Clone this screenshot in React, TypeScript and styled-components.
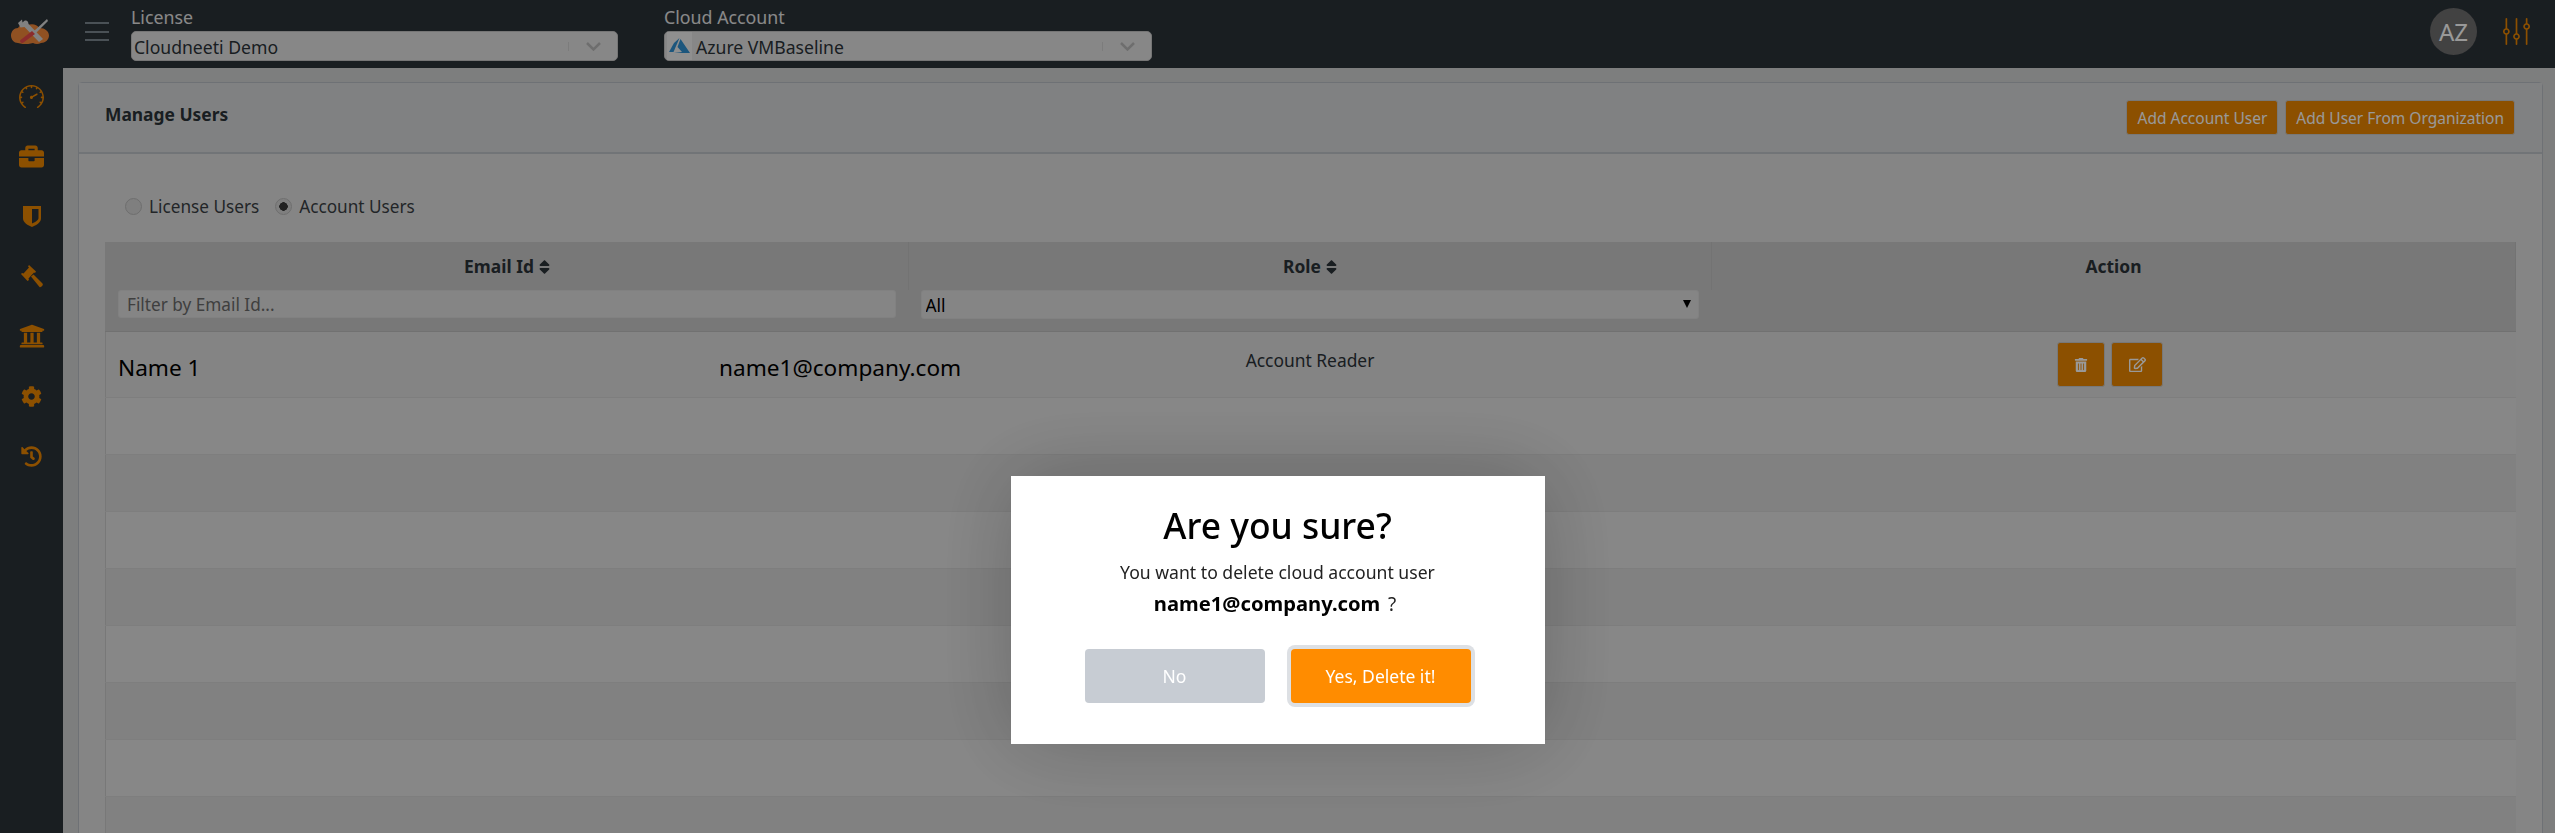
import React from "react";
import styled, { createGlobalStyle } from "styled-components";
import { FaBriefcase, FaCog, FaHistory, FaRegEdit, FaSort, FaTrashAlt, FaUniversity } from "react-icons/fa";
import { SlEqualizer, SlSpeedometer } from "react-icons/sl";

const FONT = `"Noto Sans", "Open Sans", "Liberation Sans", sans-serif`;

const GlobalStyle = createGlobalStyle`
  html, body {
    margin: 0;
    height: 100%;
    overflow: hidden;
    font-family: ${FONT};
    background: #d0d2d2;
  }
  * { box-sizing: border-box; }
`;

const Shell = styled.div`
  height: 833px;
  display: flex;
  flex-direction: column;
  overflow: hidden;
`;

const TopBar = styled.header`
  flex: 0 0 68px;
  display: flex;
  align-items: flex-start;
  background: #2b3238;
`;

const LogoSlot = styled.div`
  flex: 0 0 85px;
  padding: 18px 0 0 11px;
  line-height: 0;
`;

const Burger = styled.div`
  flex: 0 0 46px;
  padding-top: 22px;
  display: flex;
  flex-direction: column;
  gap: 6.5px;
  span {
    display: block;
    width: 24px;
    height: 2px;
    background: #7c8890;
  }
`;

const PickerGroup = styled.div<{ $width: number; $gap?: number }>`
  flex: 0 0 ${(p) => p.$width}px;
  margin-right: ${(p) => p.$gap ?? 0}px;
  padding-top: 5px;
`;

const PickerLabel = styled.div`
  height: 26px;
  font-size: 17.8px;
  line-height: 24px;
  color: #e4e4e4;
`;

const Picker = styled.div`
  height: 30px;
  display: flex;
  align-items: center;
  padding: 0 16px 0 2px;
  border-radius: 5px;
  border: 1px solid #c4c4c4;
  background: #e2e2e2;
  color: #2b3238;
  font-size: 17.6px;
`;

const PickerText = styled.span`
  flex: 1;
  padding-top: 2px;
  white-space: nowrap;
`;

const PickerDivider = styled.span`
  width: 1px;
  height: 9px;
  margin-right: 17px;
  background: #cfcfcf;
`;

const AzureBadge = styled.span`
  width: 25px;
  height: 28px;
  margin-right: 4px;
  display: flex;
  align-items: center;
  justify-content: center;
  background: #efefef;
`;

const TopRight = styled.div`
  margin-left: auto;
  padding: 8px 25px 0 0;
  display: flex;
  align-items: flex-start;
  gap: 26px;
  color: #e98500;
`;

const Avatar = styled.div`
  width: 47px;
  height: 47px;
  border-radius: 50%;
  display: flex;
  align-items: center;
  justify-content: center;
  background: #6e6e6e;
  color: #fff;
  font-size: 24px;
`;

const TuneIcon = styled(SlEqualizer)`
  width: 27px;
  height: 27px;
  margin-top: 10px;
`;

const Body = styled.div`
  flex: 1;
  display: flex;
  min-height: 0;
`;

const Sidebar = styled.nav`
  flex: 0 0 63px;
  display: flex;
  flex-direction: column;
  align-items: center;
  padding-top: 5px;
  background: #2b3238;
  color: #e98500;
`;

const NavItem = styled.div`
  height: 60px;
  width: 100%;
  display: flex;
  justify-content: center;
  align-items: center;
  padding-bottom: 14px;
`;

const Main = styled.main`
  flex: 1;
  min-width: 0;
  padding: 14px 12px 0 15px;
`;

const Card = styled.section`
  height: 800px;
  border: 1px solid #b8bcc4;
  border-radius: 4px 4px 0 0;
  background: #dedede;
`;

const CardHeader = styled.div`
  height: 71px;
  display: flex;
  align-items: flex-start;
  justify-content: space-between;
  padding: 17px 27px 0 26px;
  border-bottom: 2px solid #bcc2c6;
  background: #d6d8d9;
`;

const CardTitle = styled.h2`
  margin: 2px 0 0;
  font-size: 17.4px;
  font-weight: 700;
  line-height: 24px;
  color: #2b3238;
`;

const HeaderActions = styled.div`
  display: flex;
  gap: 7px;
`;

const OrangeButton = styled.button`
  height: 35px;
  padding: 0 10px;
  border: 1px solid #c9c9c9;
  border-radius: 3px;
  background: #e98500;
  color: #fff;
  font-family: ${FONT};
  font-size: 15.5px;
  white-space: nowrap;
`;

const CardBody = styled.div`
  padding: 41px 26px 0 26px;
`;

const RadioRow = styled.div`
  height: 22px;
  display: flex;
  align-items: center;
  padding-left: 20px;
  margin-bottom: 25px;
  font-size: 17.2px;
  color: #3a3f44;
`;

const RadioLabel = styled.label`
  display: flex;
  align-items: center;
  gap: 7px;
  margin-right: 16px;
`;

const Radio = styled.input`
  appearance: none;
  width: 17px;
  height: 17px;
  margin: 0;
  border-radius: 50%;
  border: 1px solid #b8b8b8;
  background: #d4d4d4;
  &:checked {
    background: radial-gradient(circle, #3a3a3a 0 4px, #d4d4d4 4.5px);
  }
`;

const Table = styled.table`
  width: 100%;
  table-layout: fixed;
  border-collapse: collapse;
  border-left: 1px solid #c8c8c8;
`;

const HeadCell = styled.th<{ $width?: number }>`
  width: ${(p) => (p.$width ? `${p.$width}px` : "auto")};
  height: 48px;
  padding: 0;
  border-right: 1px solid #c0c0c0;
  background: #c8c8c8;
  color: #2b3238;
  font-size: 17.4px;
  font-weight: 700;
  vertical-align: middle;
  svg {
    width: 11px;
    height: 18px;
    margin-left: 5px;
    vertical-align: -3px;
  }
`;

const FilterCell = styled.th`
  height: 41px;
  padding: 0 13px 12px 12px;
  background: #c8c8c8;
  border-bottom: 1px solid #bcbcbc;
  vertical-align: top;
`;

const FilterInput = styled.input`
  display: block;
  width: 100%;
  height: 28px;
  padding: 0 8px;
  border: 1px solid #d8d8d8;
  border-radius: 3px;
  background: #dedede;
  color: #222;
  font-family: ${FONT};
  font-size: 17.2px;
  &::placeholder { color: #6a6a6a; }
`;

const SelectWrap = styled.div`
  position: relative;
  &::after {
    content: "";
    position: absolute;
    right: 8px;
    top: 10px;
    border-left: 4px solid transparent;
    border-right: 4px solid transparent;
    border-top: 8px solid #000;
    pointer-events: none;
  }
`;

const FilterSelect = styled.select`
  display: block;
  width: 100%;
  height: 29px;
  padding: 0 4px;
  appearance: none;
  border: 1px solid #d8d8d8;
  border-radius: 3px;
  background: #dedede;
  color: #000;
  font-family: ${FONT};
  font-size: 17.4px;
`;

const Row = styled.tr<{ $shade: "first" | "light" | "dark" }>`
  background: ${(p) => (p.$shade === "first" ? "#dcdcdc" : p.$shade === "light" ? "#e2e2e2" : "#d8d8d8")};
  td { border-bottom: 1px solid #d2d2d2; }
`;

const EmptyCell = styled.td`
  height: 57px;
  padding: 0;
`;

const UserCell = styled.td`
  height: 66px;
  padding: 6px 0 0 12px;
  color: #000;
`;

const UserCellInner = styled.div`
  display: flex;
  align-items: center;
  font-size: 22.6px;
`;

const UserName = styled.span`
  flex: 0 0 601px;
`;

const RoleCell = styled.td`
  height: 66px;
  padding: 0 0 10px;
  text-align: center;
  font-size: 17.4px;
  color: #2b3238;
`;

const ActionCell = styled.td`
  height: 66px;
  padding: 0 7px 0 0;
`;

const ActionButtons = styled.div`
  display: flex;
  justify-content: center;
  gap: 6px;
`;

const IconButton = styled.button<{ $width: number }>`
  width: ${(p) => p.$width}px;
  height: 45px;
  padding: 0;
  border: 1px solid #c9c9c9;
  border-radius: 3px;
  background: #e98500;
  color: #fff;
  display: flex;
  align-items: center;
  justify-content: center;
`;

const Overlay = styled.div`
  position: fixed;
  inset: 0;
  display: flex;
  justify-content: center;
  align-items: flex-start;
  padding-top: 476px;
  background: rgba(0, 0, 0, 0.4);
`;

const Modal = styled.div`
  width: 534px;
  height: 268px;
  display: flex;
  flex-direction: column;
  align-items: center;
  padding-top: 23px;
  background: #fff;
  box-shadow: 0 0 90px rgba(0, 0, 0, 0.22);
`;

const ModalTitle = styled.h2`
  margin: 0;
  font-size: 35.4px;
  font-weight: 500;
  line-height: 52px;
  color: #000;
`;

const ModalText = styled.div`
  margin-top: 6px;
  font-size: 17.6px;
  line-height: 31px;
  color: #222;
  text-align: center;
  b {
    font-size: 20.2px;
    margin-right: 3px;
    color: #000;
  }
`;

const QuestionMark = styled.span`
  margin-right: 5px;
  font-size: 19px;
`;

const ModalButtons = styled.div`
  margin-top: 29px;
  display: flex;
  gap: 26px;
`;

const ModalButton = styled.button<{ $confirm?: boolean }>`
  width: 180px;
  height: 54px;
  border: 0;
  border-radius: 4px;
  background: ${(p) => (p.$confirm ? "#ff8c00" : "#c7ccd3")};
  color: #fff;
  font-family: ${FONT};
  font-size: 17.5px;
  box-shadow: ${(p) => (p.$confirm ? "0 0 0 4px #dde0e4" : "none")};
`;

const Logo = () => (
  <svg width="38" height="26" viewBox="0 0 38 26">
    <path d="M7 25C3 25 0 21.500 0 17.500S3 10 7 10C9 6.500 13 6 16 7.500C20 5.500 26 6 28 10C33 9.500 38 13 38 17.500S34 25 30 25C27 26.500 24 26 22 25C18 26.500 11 26.500 7 25Z" fill="#f0873a" />
    <path d="M11 1.500L7 5L9.500 9.500L13.500 9L28 24L32 21L17.500 6C17.500 3 14.500 .5 11.500 4.500Z" fill="#d8d8d8" />
    <path d="M36 1L22 14L24 16L37 3Z" fill="#d8d8d8" />
    <path d="M21 13L9.500 22C8 23.500 11 26 12.500 24.500L24 16Z" fill="#e84a4a" />
  </svg>
);

const ShieldIcon = () => (
  <svg width="18" height="21" viewBox="0 0 18 21" fill="currentColor" fillRule="evenodd">
    <path d="M0 0H18V12.500C18 16.500 13 19.500 9 21C5 19.500 0 16.500 0 12.500ZM9 3V17.500C11.500 16.500 15.500 14.500 15.500 12V3Z" />
  </svg>
);

const GavelIcon = () => (
  <svg width="23" height="23" viewBox="0 0 23 23" fill="currentColor">
    <path d="M9 0L16 6.500L15 8L14 7.500L8.500 13.500L9 15L7.500 16L1 9L2 8L3.500 8.500L9 2.500L8 1.500Z" />
    <path d="M11 11.500L13.500 9.500L22.500 18.500C23.500 20 21 23 19.500 22Z" />
  </svg>
);

const AzureIcon = () => (
  <svg width="21" height="16" viewBox="0 0 21 16" fill="#2f8fd0">
    <path d="M10.500 0L5 5L0 14H4.500Z" />
    <path d="M11.500 1L8.500 9L13 14L5 15H21Z" />
  </svg>
);

const Chevron = () => (
  <svg width="15" height="9" viewBox="0 0 15 9" fill="none" stroke="#b8b8b8" strokeWidth="2.500">
    <path d="M1 1L7.500 7.500L14 1" />
  </svg>
);

const NAV_ICONS = [
  <SlSpeedometer size={25} key="speed" />,
  <FaBriefcase size={25} key="brief" />,
  <ShieldIcon key="shield" />,
  <GavelIcon key="gavel" />,
  <FaUniversity size={26} key="bank" />,
  <FaCog size={21} key="cog" />,
  <FaHistory size={21} key="history" />,
];

const EMPTY_ROWS: ("light" | "dark")[] = ["light", "dark", "light", "dark", "light", "dark", "light", "dark"];

export default function App() {
  return (
    <>
      <GlobalStyle />
      <Shell>
        <TopBar>
          <LogoSlot>
            <Logo />
          </LogoSlot>
          <Burger>
            <span />
            <span />
            <span />
          </Burger>
          <PickerGroup $width={487} $gap={46}>
            <PickerLabel>License</PickerLabel>
            <Picker>
              <PickerText>Cloudneeti Demo</PickerText>
              <PickerDivider />
              <Chevron />
            </Picker>
          </PickerGroup>
          <PickerGroup $width={488}>
            <PickerLabel>Cloud Account</PickerLabel>
            <Picker>
              <AzureBadge>
                <AzureIcon />
              </AzureBadge>
              <PickerText>Azure VMBaseline</PickerText>
              <PickerDivider />
              <Chevron />
            </Picker>
          </PickerGroup>
          <TopRight>
            <Avatar>AZ</Avatar>
            <TuneIcon />
          </TopRight>
        </TopBar>
        <Body>
          <Sidebar>
            {NAV_ICONS.map((icon, idx) => (
              <NavItem key={`nav_${idx}`}>{icon}</NavItem>
            ))}
          </Sidebar>
          <Main>
            <Card>
              <CardHeader>
                <CardTitle>Manage Users</CardTitle>
                <HeaderActions>
                  <OrangeButton>Add Account User</OrangeButton>
                  <OrangeButton>Add User From Organization</OrangeButton>
                </HeaderActions>
              </CardHeader>
              <CardBody>
                <RadioRow>
                  <RadioLabel>
                    <Radio type="radio" name="scope" readOnly />
                    License Users
                  </RadioLabel>
                  <RadioLabel>
                    <Radio type="radio" name="scope" checked readOnly />
                    Account Users
                  </RadioLabel>
                </RadioRow>
                <Table>
                  <thead>
                    <tr>
                      <HeadCell $width={803}>
                        Email Id
                        <FaSort />
                      </HeadCell>
                      <HeadCell $width={803}>
                        Role
                        <FaSort />
                      </HeadCell>
                      <HeadCell>Action</HeadCell>
                    </tr>
                    <tr>
                      <FilterCell>
                        <FilterInput placeholder="Filter by Email Id..." readOnly />
                      </FilterCell>
                      <FilterCell>
                        <SelectWrap>
                          <FilterSelect defaultValue="All">
                            <option>All</option>
                          </FilterSelect>
                        </SelectWrap>
                      </FilterCell>
                      <FilterCell />
                    </tr>
                  </thead>
                  <tbody>
                    <Row $shade="first">
                      <UserCell>
                        <UserCellInner>
                          <UserName>Name 1</UserName>
                          <span>name1@company.com</span>
                        </UserCellInner>
                      </UserCell>
                      <RoleCell>Account Reader</RoleCell>
                      <ActionCell>
                        <ActionButtons>
                          <IconButton $width={48}>
                            <FaTrashAlt size={14} />
                          </IconButton>
                          <IconButton $width={52}>
                            <FaRegEdit size={17} />
                          </IconButton>
                        </ActionButtons>
                      </ActionCell>
                    </Row>
                    {EMPTY_ROWS.map((shade, idx) => (
                      <Row $shade={shade} key={`row_${idx}`}>
                        <EmptyCell />
                        <EmptyCell />
                        <EmptyCell />
                      </Row>
                    ))}
                  </tbody>
                </Table>
              </CardBody>
            </Card>
          </Main>
        </Body>
      </Shell>
      <Overlay>
        <Modal>
          <ModalTitle>Are you sure?</ModalTitle>
          <ModalText>
            You want to delete cloud account user
            <br />
            <b>name1@company.com</b> <QuestionMark>?</QuestionMark>
          </ModalText>
          <ModalButtons>
            <ModalButton>No</ModalButton>
            <ModalButton $confirm>Yes, Delete it!</ModalButton>
          </ModalButtons>
        </Modal>
      </Overlay>
    </>
  );
}
